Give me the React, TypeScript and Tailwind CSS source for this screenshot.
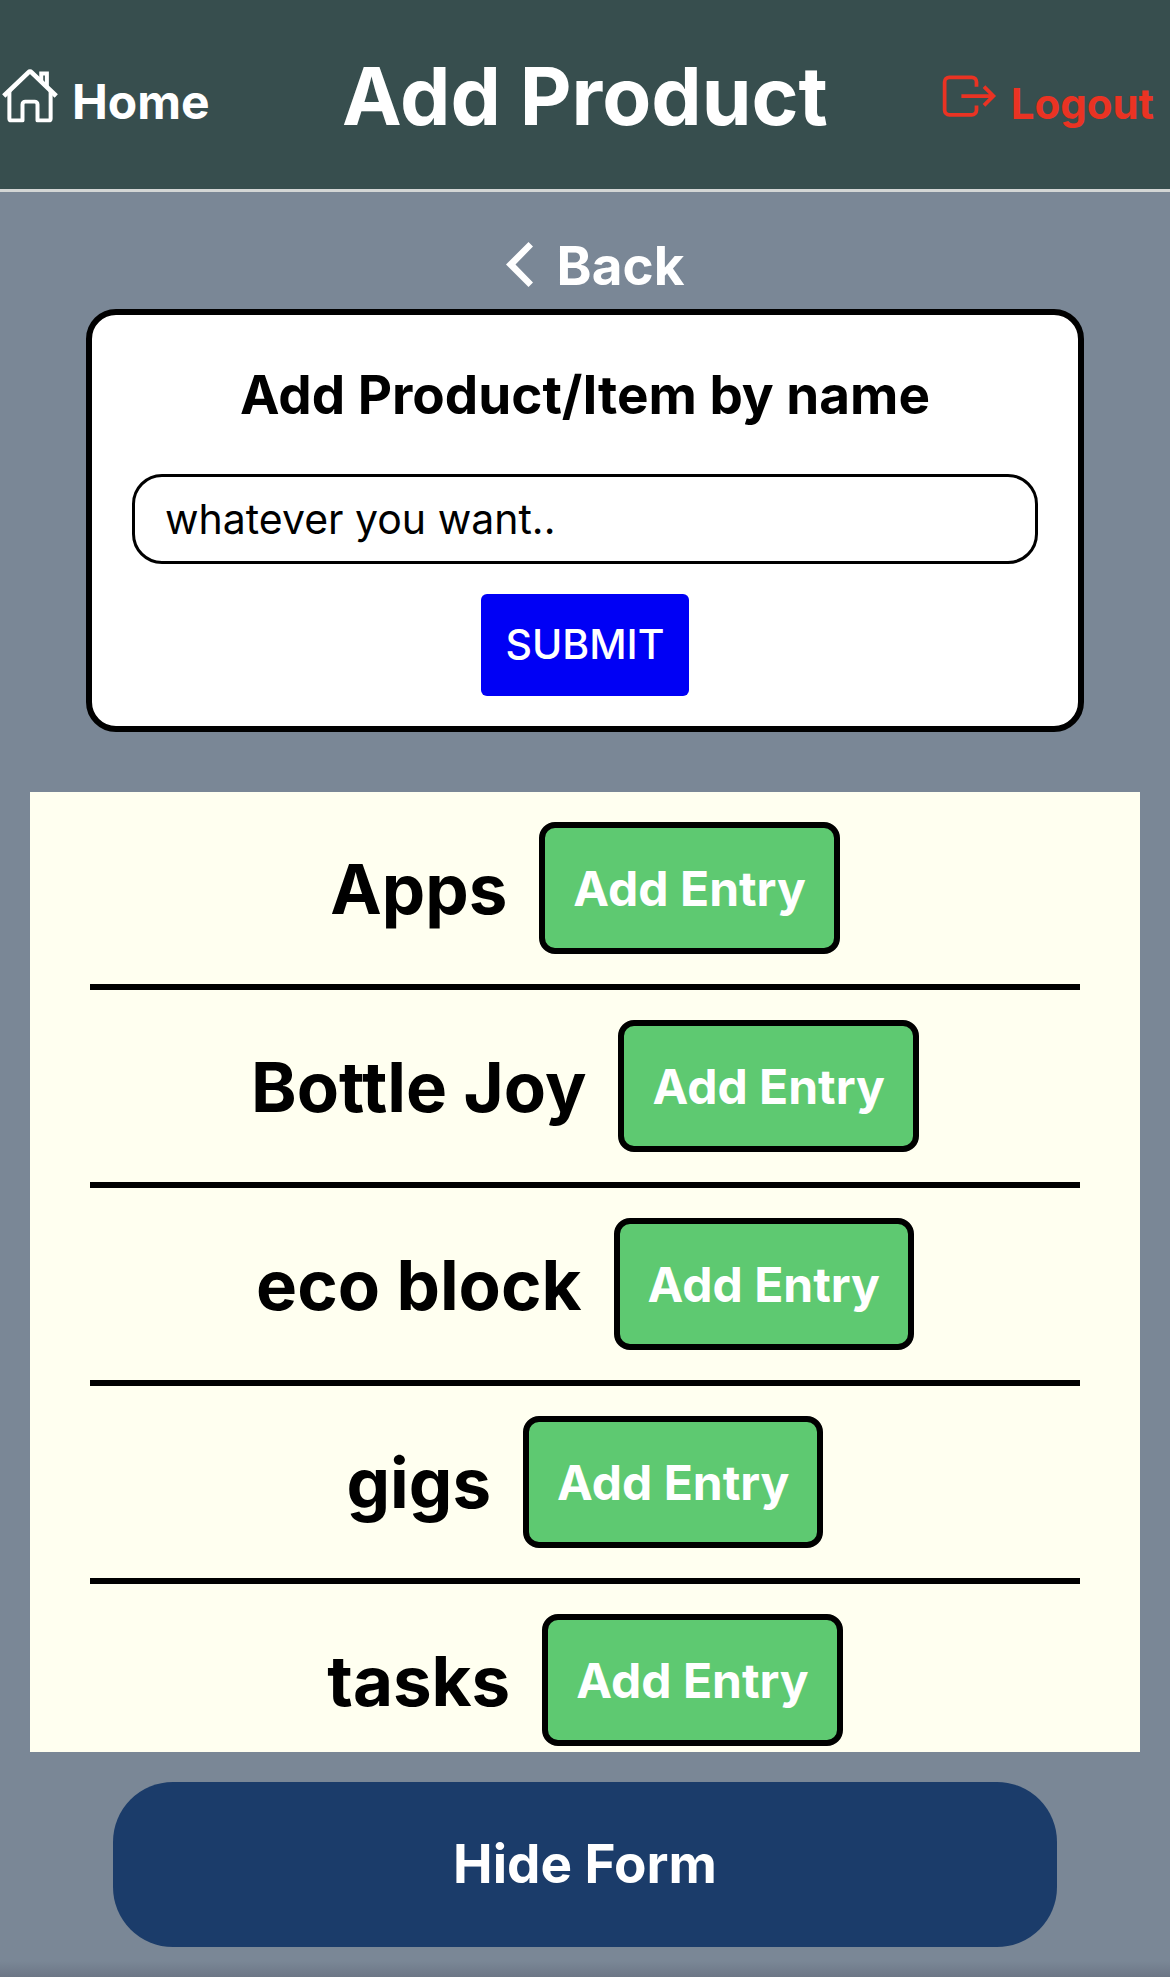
const products = ['Apps', 'Bottle Joy', 'eco block', 'gigs', 'tasks'];

function HomeIcon() {
  return (
    <svg viewBox="0 0 512 512" className="size-[60px] shrink-0" fill="none" stroke="currentColor" strokeWidth="34" strokeLinejoin="round" aria-hidden="true">
      <path d="M80 212v236a16 16 0 0016 16h96V328a24 24 0 0124-24h80a24 24 0 0124 24v136h96a16 16 0 0016-16V212" />
      <path d="M480 256L266.89 52c-5-5.28-16.69-5.34-21.78 0L32 256" strokeWidth="40" />
      <path d="M400 179V64h-48v69" strokeLinejoin="miter" />
    </svg>
  );
}

function ExitIcon() {
  return (
    <svg viewBox="0 0 512 512" className="size-[60px] shrink-0" fill="none" stroke="currentColor" strokeWidth="32" aria-hidden="true">
      <path d="M320 176v-40a40 40 0 00-40-40H88a40 40 0 00-40 40v240a40 40 0 0040 40h192a40 40 0 0040-40v-40M384 176l80 80-80 80M191 256h273" />
    </svg>
  );
}

function BackIcon() {
  return (
    <svg viewBox="0 0 27 45" className="mt-1.5 h-[45px] w-[27px] shrink-0" fill="currentColor" aria-hidden="true">
      <path d="M0 22.5L22.5 0L27 4.5L9.5 22.5L27 40.5L22.5 45Z" />
    </svg>
  );
}

export default function App() {
  return (
    <div className="flex min-h-screen flex-col bg-[#7a8796] font-['Inter',sans-serif] text-black">
      <header className="grid h-48 grid-cols-[1fr_auto_1fr] items-center border-b-3 border-[#d3d6d5] bg-[#374e4e] pt-0.5 text-white">
        <a href="#home" className="flex items-center gap-3 text-5xl font-bold">
          <HomeIcon />
          <span className="pt-3">Home</span>
        </a>
        <h1 className="text-[80px] leading-24 font-bold">Add Product</h1>
        <a href="#logout" className="flex items-center justify-end gap-3 pr-4 text-[42px] font-bold text-[#ea3323]">
          <ExitIcon />
          <span className="pt-4">Logout</span>
        </a>
      </header>

      <main className="flex flex-1 flex-col items-center">
        <a href="#back" className="mt-11 flex h-[73px] items-start gap-6 pl-5 text-[53px] leading-[60px] font-bold text-white">
          <BackIcon />
          <span>Back</span>
        </a>

        <form className="mx-[86px] flex flex-col items-center self-stretch rounded-[30px] border-6 border-black bg-white px-10 pb-[30px]" onSubmit={(e) => e.preventDefault()}>
          <label htmlFor="product" className="mt-12 text-[53px] leading-16 font-bold">
            Add Product/Item by name
          </label>
          <input
            id="product"
            type="text"
            placeholder="whatever you want.."
            className="mt-[47px] h-[90px] w-full rounded-[30px] border-3 border-black bg-white px-[30px] text-[41px] placeholder:text-black placeholder:opacity-100"
          />
          <button type="submit" className="mt-[30px] h-[102px] rounded-md bg-[#0000f5] px-6 text-[41px] font-medium text-white">
            SUBMIT
          </button>
        </form>

        <ul className="mx-[30px] mt-[60px] h-[960px] self-stretch overflow-hidden bg-[#fffff0] px-[60px]">
          {products.map((name) => (
            <li key={name} className="flex items-center justify-center gap-8 border-b-6 border-black py-[30px]">
              <span className="pt-0.5 text-[69px] leading-24 font-bold">{name}</span>
              <button type="button" className="h-[132px] rounded-2xl border-6 border-black bg-[#5ec971] px-7 pt-0.5 text-5xl font-bold text-white">
                Add Entry
              </button>
            </li>
          ))}
        </ul>

        <button type="button" className="mx-[113px] mt-[30px] h-[165px] self-stretch rounded-[60px] bg-[#1b3c6a] text-[53px] font-bold text-white">
          Hide Form
        </button>
      </main>

      <div className="mt-[14px] h-4 bg-linear-to-b from-transparent to-[#6c7686]" />
    </div>
  );
}
